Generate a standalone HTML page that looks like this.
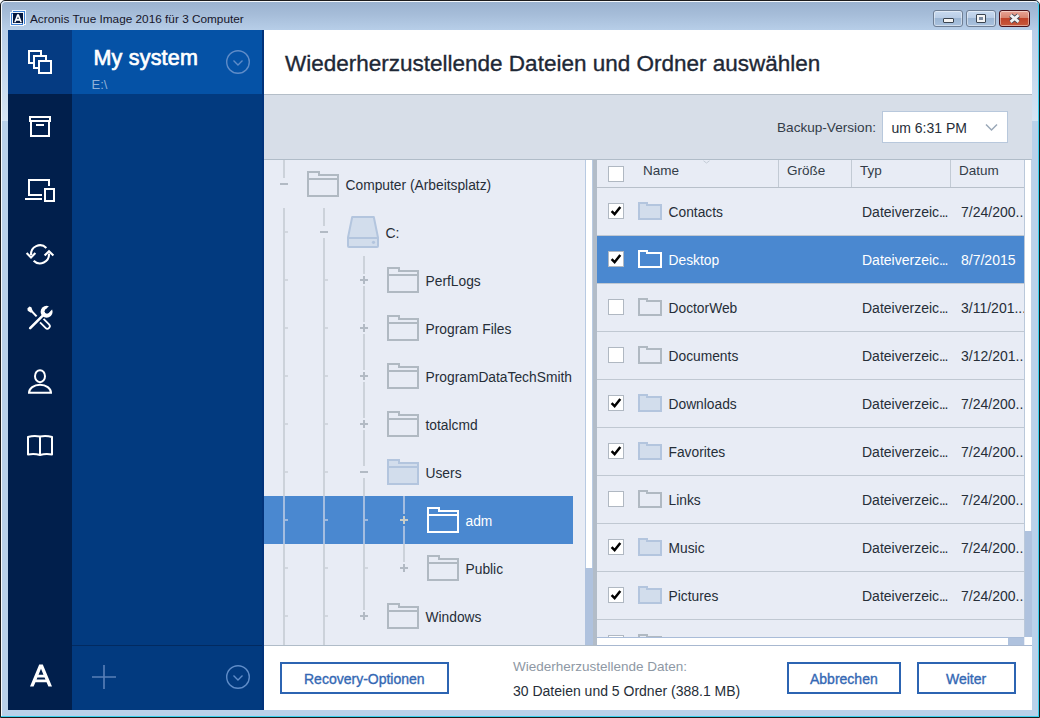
<!DOCTYPE html>
<html><head><meta charset="utf-8">
<style>
*{margin:0;padding:0;box-sizing:border-box}
html,body{width:1040px;height:718px;overflow:hidden;background:#fff}
body{font-family:"Liberation Sans",sans-serif;position:relative}
.a{position:absolute}
.t{white-space:nowrap}
svg{display:block}
</style></head><body>
<div class="a" style="left:0;top:0;width:1040px;height:718px;background:#b9d1ea;border:1px solid #1c1c1c;border-radius:5px 5px 0 0;overflow:hidden"><div class="a" style="left:0;top:0;width:1038px;height:30px;background:linear-gradient(#9ab2cf,#a6bdd9 45%,#b8cfe9)"></div><div class="a" style="left:0;top:0;width:1038px;height:716px;border:1px solid rgba(255,255,255,0.9);border-right-color:#3ad0ee;border-radius:5px 5px 0 0;border-bottom:none"></div></div><div class="a" style="left:1px;top:716px;width:1038px;height:1px;background:#3ad0ee;"></div><div class="a" style="left:2px;top:30px;width:6px;height:91px;background:linear-gradient(#b8cee8,#d6e5f4);"></div><div class="a" style="left:1032px;top:30px;width:6px;height:91px;background:linear-gradient(#b8cee8,#d6e5f4);"></div><svg class="a" style="left:10px;top:10px" width="17" height="17"><rect x="2" y="0" width="14" height="15" fill="#f4f7fb"/><rect x="3" y="1" width="12" height="13" fill="#3b7ed4"/><rect x="4" y="2" width="10" height="11" fill="#f4f7fb"/><rect x="0" y="2" width="14" height="14" fill="#f4f7fb"/><rect x="1" y="3" width="12" height="12" fill="#3b7ed4"/><rect x="2" y="4" width="10" height="10" fill="#f4f7fb"/><rect x="3" y="3" width="10" height="10" fill="#03163e"/><path d="M7.1 4.3H8.9L11.9 12.3H10.3L9.7 10.7H6.3L5.7 12.3H4.1Z M8 6.6L8.8 8.9H7.2Z" fill="#fff" fill-rule="evenodd"/></svg><div class="a t" style="left:30px;top:12.32px;font-size:11.8px;line-height:normal;color:#16162a;font-weight:400;">Acronis True Image 2016 für 3 Computer</div><div class="a" style="left:933px;top:10px;width:30px;height:17px;background:linear-gradient(#c8daf0,#b9cde6 45%,#9cb6d4 50%,#aac2de);border:1px solid #6e7e94;border-radius:3px;box-shadow:inset 0 0 0 1px rgba(255,255,255,0.45)"></div><div class="a" style="left:966px;top:10px;width:30px;height:17px;background:linear-gradient(#c8daf0,#b9cde6 45%,#9cb6d4 50%,#aac2de);border:1px solid #6e7e94;border-radius:3px;box-shadow:inset 0 0 0 1px rgba(255,255,255,0.45)"></div><div class="a" style="left:999px;top:10px;width:31px;height:17px;background:linear-gradient(#e8a496,#d88570 45%,#c0432a 50%,#c85a3c);border:1px solid #4a121a;border-radius:3px;box-shadow:inset 0 0 0 1px rgba(255,255,255,0.45)"></div><div class="a" style="left:943px;top:18px;width:11px;height:5px;background:#f4f4f4;border:1px solid #3a4450;border-radius:1px"></div><div class="a" style="left:976px;top:14px;width:10px;height:9px;background:#f4f4f4;border:1px solid #3a4450;border-radius:1px"><div class="a" style="left:2px;top:2px;width:4px;height:3px;background:#7a8aa0"></div></div><svg class="a" style="left:1006px;top:12px" width="17" height="13"><path d="M4.6 3.2L12.6 9.8M4.6 9.8L12.6 3.2" stroke="#3c4250" stroke-width="4.6" fill="none"/><path d="M4.6 3.2L12.6 9.8M4.6 9.8L12.6 3.2" stroke="#f2f2f2" stroke-width="2.8" fill="none"/></svg><div class="a" style="left:8px;top:30px;width:1024px;height:680px;background:#e8ecf5;"></div><div class="a" style="left:8px;top:30px;width:64px;height:680px;background:#011f4c;"></div><div class="a" style="left:8px;top:30px;width:64px;height:64px;background:#053b82;"></div><div class="a" style="left:72px;top:30px;width:192px;height:680px;background:#023a7f;"></div><div class="a" style="left:72px;top:30px;width:190px;height:64px;background:#0552a6;"></div><div class="a" style="left:262px;top:30px;width:2px;height:680px;background:#02337a;"></div><div class="a" style="left:72px;top:645px;width:190px;height:1px;background:#022a60;"></div><div class="a" style="left:264px;top:30px;width:768px;height:64px;background:#ffffff;"></div><div class="a" style="left:264px;top:94px;width:768px;height:1px;background:#b4bec8;"></div><div class="a" style="left:264px;top:95px;width:768px;height:64px;background:#d7dee8;"></div><div class="a" style="left:264px;top:159px;width:768px;height:1px;background:#b0bcc8;"></div><div class="a" style="left:264px;top:645px;width:333px;height:1px;background:#b0bcc8;"></div><div class="a" style="left:597px;top:645px;width:435px;height:1px;background:#a8b8d0;"></div><div class="a" style="left:264px;top:646px;width:768px;height:64px;background:#ffffff;"></div><svg class="a" style="left:8px;top:30px" width="64" height="64"><rect x="21" y="21" width="12" height="12" fill="#053b82" stroke="#fff" stroke-width="2"/><rect x="26" y="26" width="12" height="12" fill="#053b82" stroke="#fff" stroke-width="2"/><rect x="31" y="31" width="12" height="12" fill="#053b82" stroke="#fff" stroke-width="2"/></svg><svg class="a" style="left:8px;top:94px" width="64" height="64"><rect x="22" y="23" width="20" height="4" fill="none" stroke="#fff" stroke-width="2"/><path d="M23 28V42H41V28" fill="none" stroke="#fff" stroke-width="2"/><rect x="28" y="30" width="8" height="2" fill="#fff"/></svg><svg class="a" style="left:8px;top:158px" width="64" height="64"><path d="M34 37H21V22H41V28" fill="none" stroke="#fff" stroke-width="2"/><rect x="17" y="40" width="17" height="2" fill="#fff"/><rect x="37" y="31" width="9" height="12" fill="none" stroke="#fff" stroke-width="2"/></svg><svg class="a" style="left:8px;top:222px" width="64" height="64"><path d="M23.03 33.08A9 9 0 0 1 38.36 25.94" fill="none" stroke="#fff" stroke-width="2.1"/><path d="M18.6 31L23 35.4L27.4 31" fill="none" stroke="#fff" stroke-width="2.1"/><path d="M25.64 38.66A9 9 0 0 0 40.97 31.52" fill="none" stroke="#fff" stroke-width="2.1"/><path d="M36.6 33.6L41 29.2L45.4 33.6" fill="none" stroke="#fff" stroke-width="2.1"/></svg><svg class="a" style="left:8px;top:286px" width="64" height="64"><defs><mask id="wm"><rect width="64" height="64" fill="#fff"/><circle cx="39" cy="25.3" r="2.4" fill="#000"/><path d="M40.63 26.93L37.37 23.67L44.44 16.6L47.7 19.86Z" fill="#000"/></mask></defs><path d="M23.5 25L28.6 30.4" stroke="#fff" stroke-width="2" fill="none"/><path d="M19.4 22.6L21.4 20.6L23.4 21.2L24.8 25.6L22.9 26.8L19.7 24.7Z" fill="#fff"/><path d="M35.57 32.93L41.07 38.43A2.5 2.5 0 0 1 37.53 41.97L32.03 36.47" stroke="#fff" stroke-width="1.8" fill="none"/><path d="M22.2 42.2L36 28.4" stroke="#fff" stroke-width="2.6" stroke-linecap="round" fill="none"/><circle cx="38.6" cy="25.7" r="6" fill="#fff" mask="url(#wm)"/></svg><svg class="a" style="left:8px;top:350px" width="64" height="64"><ellipse cx="32" cy="26.2" rx="5" ry="6" fill="none" stroke="#fff" stroke-width="2"/><path d="M21 42.8A11 8 0 0 1 43 42.8Z" fill="none" stroke="#fff" stroke-width="2"/></svg><svg class="a" style="left:8px;top:414px" width="64" height="64"><path d="M20 40.5V23A12 5 0 0 1 32 22.5A12 5 0 0 1 44 23V40.5A12 5 0 0 0 32 41A12 5 0 0 0 20 40.5Z M32 22.5V41" fill="none" stroke="#fff" stroke-width="2" stroke-linejoin="round"/></svg><svg class="a" style="left:8px;top:646px" width="64" height="64"><path fill="#fff" fill-rule="evenodd" d="M31.2 18.4H34.8L44 40.6H40.4L38.57 36.2H27.43L25.6 40.6H22Z M33 22.8L35.46 28.7H30.54Z M29.42 31.4H36.58L37.41 33.4H28.59Z"/></svg><div class="a t" style="left:93.5px;top:45.74px;font-size:21.5px;line-height:normal;color:#ffffff;font-weight:400;-webkit-text-stroke:0.7px #fff;letter-spacing:0.2px">My system</div><div class="a t" style="left:91.5px;top:77.23px;font-size:13px;line-height:normal;color:#8fb0d8;font-weight:400;">E:\</div><svg class="a" style="left:224px;top:48px" width="28" height="28"><circle cx="14" cy="14" r="11.3" fill="none" stroke="#5f8cc8" stroke-width="1.4"/><path d="M9.5 12.5L14 17L18.5 12.5" fill="none" stroke="#5f8cc8" stroke-width="1.4"/></svg><svg class="a" style="left:90px;top:662.6px" width="28" height="28"><path d="M14 2V26M2 14H26" stroke="#5a80b8" stroke-width="1.6"/></svg><svg class="a" style="left:224px;top:662.6px" width="28" height="28"><circle cx="14" cy="14" r="11.3" fill="none" stroke="#5f8cc8" stroke-width="1.4"/><path d="M9.5 12.5L14 17L18.5 12.5" fill="none" stroke="#5f8cc8" stroke-width="1.4"/></svg><div class="a t" style="left:285px;top:51.44px;font-size:22.5px;line-height:normal;color:#1e2836;font-weight:400;-webkit-text-stroke:0.35px #1e2836">Wiederherzustellende Dateien und Ordner auswählen</div><div class="a t" style="left:777px;top:120.29px;font-size:13.6px;line-height:normal;color:#333c48;font-weight:400;">Backup-Version:</div><div class="a" style="left:882px;top:111px;width:126px;height:32px;background:#ffffff;border:1px solid #b8c8dc"></div><div class="a t" style="left:891.5px;top:119.93px;font-size:14px;line-height:normal;color:#262e38;font-weight:400;">um 6:31 PM</div><svg class="a" style="left:984px;top:122px" width="16" height="12"><path d="M2 2.5L7.5 8L13 2.5" fill="none" stroke="#9aa8b8" stroke-width="1.5"/></svg><div class="a" style="left:264px;top:160px;width:321px;height:485px;overflow:hidden"><div class="a" style="left:0px;top:336px;width:309px;height:48px;background:#4a88d0;"></div><div class="a" style="left:19px;top:0px;width:2px;height:18px;background:#ccd2da;"></div><div class="a" style="left:16px;top:23px;width:8px;height:2px;background:#b2bac4;"></div><div class="a" style="left:19px;top:48px;width:2px;height:437px;background:#ccd2da;"></div><div class="a" style="left:59px;top:48px;width:2px;height:18px;background:#ccd2da;"></div><div class="a" style="left:56px;top:71px;width:8px;height:2px;background:#b2bac4;"></div><div class="a" style="left:59px;top:78px;width:2px;height:407px;background:#ccd2da;"></div><div class="a" style="left:99px;top:96px;width:2px;height:18px;background:#ccd2da;"></div><div class="a" style="left:96px;top:119px;width:8px;height:2px;background:#b2bac4;"></div><div class="a" style="left:99px;top:116px;width:2px;height:8px;background:#b2bac4;"></div><div class="a" style="left:99px;top:126px;width:2px;height:18px;background:#ccd2da;"></div><div class="a" style="left:99px;top:144px;width:2px;height:18px;background:#ccd2da;"></div><div class="a" style="left:96px;top:167px;width:8px;height:2px;background:#b2bac4;"></div><div class="a" style="left:99px;top:164px;width:2px;height:8px;background:#b2bac4;"></div><div class="a" style="left:99px;top:174px;width:2px;height:18px;background:#ccd2da;"></div><div class="a" style="left:99px;top:192px;width:2px;height:18px;background:#ccd2da;"></div><div class="a" style="left:96px;top:215px;width:8px;height:2px;background:#b2bac4;"></div><div class="a" style="left:99px;top:212px;width:2px;height:8px;background:#b2bac4;"></div><div class="a" style="left:99px;top:222px;width:2px;height:18px;background:#ccd2da;"></div><div class="a" style="left:99px;top:240px;width:2px;height:18px;background:#ccd2da;"></div><div class="a" style="left:96px;top:263px;width:8px;height:2px;background:#b2bac4;"></div><div class="a" style="left:99px;top:260px;width:2px;height:8px;background:#b2bac4;"></div><div class="a" style="left:99px;top:270px;width:2px;height:18px;background:#ccd2da;"></div><div class="a" style="left:99px;top:288px;width:2px;height:18px;background:#ccd2da;"></div><div class="a" style="left:96px;top:311px;width:8px;height:2px;background:#b2bac4;"></div><div class="a" style="left:99px;top:318px;width:2px;height:18px;background:#ccd2da;"></div><div class="a" style="left:99px;top:336px;width:2px;height:114px;background:#ccd2da;"></div><div class="a" style="left:96px;top:455px;width:8px;height:2px;background:#b2bac4;"></div><div class="a" style="left:99px;top:452px;width:2px;height:8px;background:#b2bac4;"></div><div class="a" style="left:139px;top:336px;width:2px;height:18px;background:#a4bde0;"></div><div class="a" style="left:136px;top:359px;width:8px;height:2px;background:#c9cdc8;"></div><div class="a" style="left:139px;top:356px;width:2px;height:8px;background:#c9cdc8;"></div><div class="a" style="left:139px;top:366px;width:2px;height:18px;background:#a4bde0;"></div><div class="a" style="left:139px;top:384px;width:2px;height:18px;background:#ccd2da;"></div><div class="a" style="left:136px;top:407px;width:8px;height:2px;background:#b2bac4;"></div><div class="a" style="left:139px;top:404px;width:2px;height:8px;background:#b2bac4;"></div><div class="a" style="left:19px;top:336px;width:2px;height:48px;background:#a4bde0;"></div><div class="a" style="left:59px;top:336px;width:2px;height:48px;background:#a4bde0;"></div><div class="a" style="left:99px;top:336px;width:2px;height:48px;background:#a4bde0;"></div><div class="a" style="left:21px;top:71px;width:3px;height:2px;background:#d2d7df;"></div><div class="a" style="left:21px;top:119px;width:3px;height:2px;background:#d2d7df;"></div><div class="a" style="left:21px;top:167px;width:3px;height:2px;background:#d2d7df;"></div><div class="a" style="left:21px;top:215px;width:3px;height:2px;background:#d2d7df;"></div><div class="a" style="left:21px;top:263px;width:3px;height:2px;background:#d2d7df;"></div><div class="a" style="left:21px;top:311px;width:3px;height:2px;background:#d2d7df;"></div><div class="a" style="left:21px;top:359px;width:3px;height:2px;background:#9fb9dd;"></div><div class="a" style="left:21px;top:407px;width:3px;height:2px;background:#d2d7df;"></div><div class="a" style="left:21px;top:455px;width:3px;height:2px;background:#d2d7df;"></div><div class="a" style="left:61px;top:119px;width:3px;height:2px;background:#d2d7df;"></div><div class="a" style="left:61px;top:167px;width:3px;height:2px;background:#d2d7df;"></div><div class="a" style="left:61px;top:215px;width:3px;height:2px;background:#d2d7df;"></div><div class="a" style="left:61px;top:263px;width:3px;height:2px;background:#d2d7df;"></div><div class="a" style="left:61px;top:311px;width:3px;height:2px;background:#d2d7df;"></div><div class="a" style="left:61px;top:359px;width:3px;height:2px;background:#9fb9dd;"></div><div class="a" style="left:61px;top:407px;width:3px;height:2px;background:#d2d7df;"></div><div class="a" style="left:61px;top:455px;width:3px;height:2px;background:#d2d7df;"></div><div class="a" style="left:101px;top:359px;width:3px;height:2px;background:#9fb9dd;"></div><div class="a" style="left:101px;top:407px;width:3px;height:2px;background:#d2d7df;"></div></div><svg class="a" style="left:307px;top:171px" width="32" height="26"><path d="M0 0H13V3H32V26H0Z M2 2V24H30V5H11V2Z" fill="#b0b9c2" fill-rule="evenodd"/><rect x="0" y="7" width="32" height="2" fill="#b0b9c2"/></svg><div class="a t" style="left:345.5px;top:177.51px;font-size:13.8px;line-height:normal;color:#262e38;font-weight:400;">Computer (Arbeitsplatz)</div><svg class="a" style="left:347px;top:216px" width="32" height="32"><path d="M5.2 1H26.8L31 21.5V30A1 1 0 0 1 30 31H2A1 1 0 0 1 1 30V21.5Z" fill="#d2ddec" stroke="#b3c5de" stroke-width="2" stroke-linejoin="round"/><path d="M1 22H31" stroke="#b3c5de" stroke-width="2"/><circle cx="26.5" cy="26.3" r="1.6" fill="#b3c5de"/></svg><div class="a t" style="left:385.5px;top:225.33px;font-size:14px;line-height:normal;color:#262e38;font-weight:400;">C:</div><svg class="a" style="left:387px;top:267px" width="32" height="26"><path d="M0 0H13V3H32V26H0Z M2 2V24H30V5H11V2Z" fill="#b0b9c2" fill-rule="evenodd"/><rect x="0" y="7" width="32" height="2" fill="#b0b9c2"/></svg><div class="a t" style="left:425.5px;top:273.51px;font-size:13.8px;line-height:normal;color:#262e38;font-weight:400;">PerfLogs</div><svg class="a" style="left:387px;top:315px" width="32" height="26"><path d="M0 0H13V3H32V26H0Z M2 2V24H30V5H11V2Z" fill="#b0b9c2" fill-rule="evenodd"/><rect x="0" y="7" width="32" height="2" fill="#b0b9c2"/></svg><div class="a t" style="left:425.5px;top:321.51px;font-size:13.8px;line-height:normal;color:#262e38;font-weight:400;">Program Files</div><svg class="a" style="left:387px;top:363px" width="32" height="26"><path d="M0 0H13V3H32V26H0Z M2 2V24H30V5H11V2Z" fill="#b0b9c2" fill-rule="evenodd"/><rect x="0" y="7" width="32" height="2" fill="#b0b9c2"/></svg><div class="a t" style="left:425.5px;top:369.51px;font-size:13.8px;line-height:normal;color:#262e38;font-weight:400;">ProgramDataTechSmith</div><svg class="a" style="left:387px;top:411px" width="32" height="26"><path d="M0 0H13V3H32V26H0Z M2 2V24H30V5H11V2Z" fill="#b0b9c2" fill-rule="evenodd"/><rect x="0" y="7" width="32" height="2" fill="#b0b9c2"/></svg><div class="a t" style="left:425.5px;top:417.51px;font-size:13.8px;line-height:normal;color:#262e38;font-weight:400;">totalcmd</div><svg class="a" style="left:387px;top:603px" width="32" height="26"><path d="M0 0H13V3H32V26H0Z M2 2V24H30V5H11V2Z" fill="#b0b9c2" fill-rule="evenodd"/><rect x="0" y="7" width="32" height="2" fill="#b0b9c2"/></svg><div class="a t" style="left:425.5px;top:609.51px;font-size:13.8px;line-height:normal;color:#262e38;font-weight:400;">Windows</div><svg class="a" style="left:387px;top:459px" width="32" height="26"><path d="M1 1H12V4H31V25H1Z" fill="#d2ddec"/><path d="M0 0H13V3H32V26H0Z M2 2V24H30V5H11V2Z" fill="#b3c5de" fill-rule="evenodd"/><rect x="0" y="7" width="32" height="2" fill="#b3c5de"/></svg><div class="a t" style="left:425.5px;top:465.51px;font-size:13.8px;line-height:normal;color:#262e38;font-weight:400;">Users</div><svg class="a" style="left:427px;top:507px" width="32" height="26"><path d="M0 0H13V3H32V26H0Z M2 2V24H30V5H11V2Z" fill="#ffffff" fill-rule="evenodd"/><rect x="0" y="7" width="32" height="2" fill="#ffffff"/></svg><div class="a t" style="left:465.5px;top:513.51px;font-size:13.8px;line-height:normal;color:#ffffff;font-weight:400;">adm</div><svg class="a" style="left:427px;top:555px" width="32" height="26"><path d="M0 0H13V3H32V26H0Z M2 2V24H30V5H11V2Z" fill="#b0b9c2" fill-rule="evenodd"/><rect x="0" y="7" width="32" height="2" fill="#b0b9c2"/></svg><div class="a t" style="left:465.5px;top:561.51px;font-size:13.8px;line-height:normal;color:#262e38;font-weight:400;">Public</div><div class="a" style="left:585px;top:160px;width:1px;height:485px;background:#b8cae2;"></div><div class="a" style="left:586px;top:160px;width:6px;height:485px;background:#ffffff;"></div><div class="a" style="left:592px;top:160px;width:1px;height:485px;background:#b8cae2;"></div><div class="a" style="left:585px;top:568px;width:8px;height:77px;background:#afc2de;"></div><div class="a" style="left:593px;top:160px;width:4px;height:485px;background:#b2bcc8;"></div><div class="a" style="left:597px;top:160px;width:427px;height:477px;background:#e8ecf5;"></div><div class="a" style="left:608px;top:166px;width:16px;height:16px;background:#ffffff;border:1px solid #b0b8c2"></div><div class="a t" style="left:643px;top:162.78px;font-size:13.5px;line-height:normal;color:#333c48;font-weight:400;">Name</div><svg class="a" style="left:703px;top:160px" width="7" height="4"><path d="M0.5 0.8L3.5 3L6.5 0.8" fill="none" stroke="#c4ccd6" stroke-width="1"/></svg><div class="a" style="left:778px;top:160px;width:1px;height:27px;background:#c2cad4;"></div><div class="a t" style="left:787px;top:162.78px;font-size:13.5px;line-height:normal;color:#333c48;font-weight:400;">Größe</div><div class="a" style="left:851px;top:160px;width:1px;height:27px;background:#c2cad4;"></div><div class="a t" style="left:860px;top:162.78px;font-size:13.5px;line-height:normal;color:#333c48;font-weight:400;">Typ</div><div class="a" style="left:950px;top:160px;width:1px;height:27px;background:#c2cad4;"></div><div class="a t" style="left:959px;top:162.78px;font-size:13.5px;line-height:normal;color:#333c48;font-weight:400;">Datum</div><div class="a" style="left:597px;top:187px;width:427px;height:1px;background:#b8c0ca;"></div><div class="a" style="left:597px;top:188px;width:427px;height:449px;overflow:hidden"><div class="a" style="left:0px;top:47px;width:427px;height:1px;background:#c0c8d2;"></div><div class="a" style="left:11px;top:15px;width:16px;height:16px;background:#fff;border:1px solid #b0b8c2"><svg class="a" style="left:0;top:0" width="14" height="14"><path d="M2.6 7.2L5.6 10.2L11.3 2.9" fill="none" stroke="#000" stroke-width="2.5"/></svg></div><svg class="a" style="left:41px;top:14px" width="24" height="18"><path d="M1 1H9V3H23V17H1Z" fill="#d2ddec"/><path d="M0 0H10V2H24V18H0Z M2 2V16H22V4H8V2Z" fill="#b3c5de" fill-rule="evenodd"/></svg><div class="a t" style="left:71.5px;top:16.51px;font-size:13.8px;line-height:normal;color:#262e38;font-weight:400;">Contacts</div><div class="a t" style="left:265px;top:16.33px;font-size:14px;line-height:normal;color:#262e38;font-weight:400;">Dateiverzeic<span style="letter-spacing:-1.1px">...</span></div><div class="a t" style="left:364px;top:16.33px;font-size:14px;line-height:normal;color:#262e38;font-weight:400;">7/24/200...</div><div class="a" style="left:0px;top:48px;width:427px;height:48px;background:#4a88d0;"></div><div class="a" style="left:0px;top:95px;width:427px;height:1px;background:#c0c8d2;"></div><div class="a" style="left:11px;top:63px;width:16px;height:16px;background:#fff;border:1px solid #b0b8c2"><svg class="a" style="left:0;top:0" width="14" height="14"><path d="M2.6 7.2L5.6 10.2L11.3 2.9" fill="none" stroke="#000" stroke-width="2.5"/></svg></div><svg class="a" style="left:41px;top:62px" width="24" height="18"><path d="M0 0H10V2H24V18H0Z M2 2V16H22V4H8V2Z" fill="#ffffff" fill-rule="evenodd"/></svg><div class="a t" style="left:71.5px;top:64.51px;font-size:13.8px;line-height:normal;color:#ffffff;font-weight:400;">Desktop</div><div class="a t" style="left:265px;top:64.33px;font-size:14px;line-height:normal;color:#ffffff;font-weight:400;">Dateiverzeic<span style="letter-spacing:-1.1px">...</span></div><div class="a t" style="left:364px;top:64.33px;font-size:14px;line-height:normal;color:#ffffff;font-weight:400;">8/7/2015</div><div class="a" style="left:0px;top:143px;width:427px;height:1px;background:#c0c8d2;"></div><div class="a" style="left:11px;top:111px;width:16px;height:16px;background:#fff;border:1px solid #b0b8c2"></div><svg class="a" style="left:41px;top:110px" width="24" height="18"><path d="M0 0H10V2H24V18H0Z M2 2V16H22V4H8V2Z" fill="#b0b9c2" fill-rule="evenodd"/></svg><div class="a t" style="left:71.5px;top:112.51px;font-size:13.8px;line-height:normal;color:#262e38;font-weight:400;">DoctorWeb</div><div class="a t" style="left:265px;top:112.33px;font-size:14px;line-height:normal;color:#262e38;font-weight:400;">Dateiverzeic<span style="letter-spacing:-1.1px">...</span></div><div class="a t" style="left:364px;top:112.33px;font-size:14px;line-height:normal;color:#262e38;font-weight:400;">3/11/201...</div><div class="a" style="left:0px;top:191px;width:427px;height:1px;background:#c0c8d2;"></div><div class="a" style="left:11px;top:159px;width:16px;height:16px;background:#fff;border:1px solid #b0b8c2"></div><svg class="a" style="left:41px;top:158px" width="24" height="18"><path d="M0 0H10V2H24V18H0Z M2 2V16H22V4H8V2Z" fill="#b0b9c2" fill-rule="evenodd"/></svg><div class="a t" style="left:71.5px;top:160.51px;font-size:13.8px;line-height:normal;color:#262e38;font-weight:400;">Documents</div><div class="a t" style="left:265px;top:160.33px;font-size:14px;line-height:normal;color:#262e38;font-weight:400;">Dateiverzeic<span style="letter-spacing:-1.1px">...</span></div><div class="a t" style="left:364px;top:160.33px;font-size:14px;line-height:normal;color:#262e38;font-weight:400;">3/12/201...</div><div class="a" style="left:0px;top:239px;width:427px;height:1px;background:#c0c8d2;"></div><div class="a" style="left:11px;top:207px;width:16px;height:16px;background:#fff;border:1px solid #b0b8c2"><svg class="a" style="left:0;top:0" width="14" height="14"><path d="M2.6 7.2L5.6 10.2L11.3 2.9" fill="none" stroke="#000" stroke-width="2.5"/></svg></div><svg class="a" style="left:41px;top:206px" width="24" height="18"><path d="M1 1H9V3H23V17H1Z" fill="#d2ddec"/><path d="M0 0H10V2H24V18H0Z M2 2V16H22V4H8V2Z" fill="#b3c5de" fill-rule="evenodd"/></svg><div class="a t" style="left:71.5px;top:208.51px;font-size:13.8px;line-height:normal;color:#262e38;font-weight:400;">Downloads</div><div class="a t" style="left:265px;top:208.33px;font-size:14px;line-height:normal;color:#262e38;font-weight:400;">Dateiverzeic<span style="letter-spacing:-1.1px">...</span></div><div class="a t" style="left:364px;top:208.33px;font-size:14px;line-height:normal;color:#262e38;font-weight:400;">7/24/200...</div><div class="a" style="left:0px;top:287px;width:427px;height:1px;background:#c0c8d2;"></div><div class="a" style="left:11px;top:255px;width:16px;height:16px;background:#fff;border:1px solid #b0b8c2"><svg class="a" style="left:0;top:0" width="14" height="14"><path d="M2.6 7.2L5.6 10.2L11.3 2.9" fill="none" stroke="#000" stroke-width="2.5"/></svg></div><svg class="a" style="left:41px;top:254px" width="24" height="18"><path d="M1 1H9V3H23V17H1Z" fill="#d2ddec"/><path d="M0 0H10V2H24V18H0Z M2 2V16H22V4H8V2Z" fill="#b3c5de" fill-rule="evenodd"/></svg><div class="a t" style="left:71.5px;top:256.51px;font-size:13.8px;line-height:normal;color:#262e38;font-weight:400;">Favorites</div><div class="a t" style="left:265px;top:256.33px;font-size:14px;line-height:normal;color:#262e38;font-weight:400;">Dateiverzeic<span style="letter-spacing:-1.1px">...</span></div><div class="a t" style="left:364px;top:256.33px;font-size:14px;line-height:normal;color:#262e38;font-weight:400;">7/24/200...</div><div class="a" style="left:0px;top:335px;width:427px;height:1px;background:#c0c8d2;"></div><div class="a" style="left:11px;top:303px;width:16px;height:16px;background:#fff;border:1px solid #b0b8c2"></div><svg class="a" style="left:41px;top:302px" width="24" height="18"><path d="M0 0H10V2H24V18H0Z M2 2V16H22V4H8V2Z" fill="#b0b9c2" fill-rule="evenodd"/></svg><div class="a t" style="left:71.5px;top:304.51px;font-size:13.8px;line-height:normal;color:#262e38;font-weight:400;">Links</div><div class="a t" style="left:265px;top:304.33px;font-size:14px;line-height:normal;color:#262e38;font-weight:400;">Dateiverzeic<span style="letter-spacing:-1.1px">...</span></div><div class="a t" style="left:364px;top:304.33px;font-size:14px;line-height:normal;color:#262e38;font-weight:400;">7/24/200...</div><div class="a" style="left:0px;top:383px;width:427px;height:1px;background:#c0c8d2;"></div><div class="a" style="left:11px;top:351px;width:16px;height:16px;background:#fff;border:1px solid #b0b8c2"><svg class="a" style="left:0;top:0" width="14" height="14"><path d="M2.6 7.2L5.6 10.2L11.3 2.9" fill="none" stroke="#000" stroke-width="2.5"/></svg></div><svg class="a" style="left:41px;top:350px" width="24" height="18"><path d="M1 1H9V3H23V17H1Z" fill="#d2ddec"/><path d="M0 0H10V2H24V18H0Z M2 2V16H22V4H8V2Z" fill="#b3c5de" fill-rule="evenodd"/></svg><div class="a t" style="left:71.5px;top:352.51px;font-size:13.8px;line-height:normal;color:#262e38;font-weight:400;">Music</div><div class="a t" style="left:265px;top:352.33px;font-size:14px;line-height:normal;color:#262e38;font-weight:400;">Dateiverzeic<span style="letter-spacing:-1.1px">...</span></div><div class="a t" style="left:364px;top:352.33px;font-size:14px;line-height:normal;color:#262e38;font-weight:400;">7/24/200...</div><div class="a" style="left:0px;top:431px;width:427px;height:1px;background:#c0c8d2;"></div><div class="a" style="left:11px;top:399px;width:16px;height:16px;background:#fff;border:1px solid #b0b8c2"><svg class="a" style="left:0;top:0" width="14" height="14"><path d="M2.6 7.2L5.6 10.2L11.3 2.9" fill="none" stroke="#000" stroke-width="2.5"/></svg></div><svg class="a" style="left:41px;top:398px" width="24" height="18"><path d="M1 1H9V3H23V17H1Z" fill="#d2ddec"/><path d="M0 0H10V2H24V18H0Z M2 2V16H22V4H8V2Z" fill="#b3c5de" fill-rule="evenodd"/></svg><div class="a t" style="left:71.5px;top:400.51px;font-size:13.8px;line-height:normal;color:#262e38;font-weight:400;">Pictures</div><div class="a t" style="left:265px;top:400.33px;font-size:14px;line-height:normal;color:#262e38;font-weight:400;">Dateiverzeic<span style="letter-spacing:-1.1px">...</span></div><div class="a t" style="left:364px;top:400.33px;font-size:14px;line-height:normal;color:#262e38;font-weight:400;">7/24/200...</div><div class="a" style="left:0px;top:479px;width:427px;height:1px;background:#c0c8d2;"></div><div class="a" style="left:11px;top:447px;width:16px;height:16px;background:#fff;border:1px solid #b0b8c2"></div><svg class="a" style="left:41px;top:446px" width="24" height="18"><path d="M0 0H10V2H24V18H0Z M2 2V16H22V4H8V2Z" fill="#b0b9c2" fill-rule="evenodd"/></svg><div class="a t" style="left:71.5px;top:448.51px;font-size:13.8px;line-height:normal;color:#262e38;font-weight:400;">Videos</div></div><div class="a" style="left:1024px;top:160px;width:1px;height:477px;background:#bac8da;"></div><div class="a" style="left:1025px;top:160px;width:7px;height:477px;background:#ffffff;"></div><div class="a" style="left:1031px;top:160px;width:1px;height:485px;background:#bfd0e6;"></div><div class="a" style="left:1025px;top:531px;width:7px;height:106px;background:#afc2de;"></div><div class="a" style="left:597px;top:637px;width:427px;height:1px;background:#a9bcd8;"></div><div class="a" style="left:597px;top:638px;width:427px;height:7px;background:#ffffff;"></div><div class="a" style="left:1008px;top:638px;width:16px;height:7px;background:#afc2de;"></div><div class="a" style="left:1025px;top:637px;width:7px;height:8px;background:#ffffff;"></div><div class="a" style="left:280px;top:662px;width:169px;height:32px;border:2px solid #2c64b2;background:#fff"></div><div class="a t" style="left:304px;top:671.33px;font-size:14px;line-height:normal;color:#3468b4;font-weight:400;-webkit-text-stroke:0.35px #3468b4">Recovery-Optionen</div><div class="a" style="left:787px;top:662px;width:114px;height:32px;border:2px solid #2c64b2;background:#fff"></div><div class="a t" style="left:810px;top:671.33px;font-size:14px;line-height:normal;color:#3468b4;font-weight:400;-webkit-text-stroke:0.35px #3468b4">Abbrechen</div><div class="a" style="left:917px;top:662px;width:99px;height:32px;border:2px solid #2c64b2;background:#fff"></div><div class="a t" style="left:946px;top:671.33px;font-size:14px;line-height:normal;color:#3468b4;font-weight:400;-webkit-text-stroke:0.35px #3468b4">Weiter</div><div class="a t" style="left:513px;top:658.78px;font-size:13.5px;line-height:normal;color:#8e98a4;font-weight:400;">Wiederherzustellende Daten:</div><div class="a t" style="left:513px;top:683.33px;font-size:14px;line-height:normal;color:#262e38;font-weight:400;">30 Dateien und 5 Ordner (388.1 MB)</div>
</body></html>
